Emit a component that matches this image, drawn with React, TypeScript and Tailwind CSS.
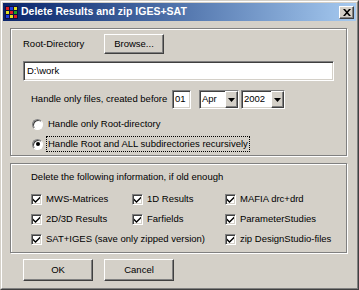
const raised =
  "border border-t-white border-l-white border-r-[#404040] border-b-[#404040] shadow-[inset_-1px_-1px_0_#808080] bg-[#d4d0c8]";
const sunken =
  "border border-t-[#808080] border-l-[#808080] border-r-white border-b-white shadow-[inset_1px_1px_0_#404040,inset_-1px_-1px_0_#d4d0c8] bg-white";
const etched =
  "border border-[#808080] shadow-[inset_1px_1px_0_white,1px_1px_0_white]";

function CheckBox({ label, className = "" }: { label: string; className?: string }) {
  return (
    <div className={"flex items-center h-[13px] whitespace-nowrap " + className}>
      <div className={sunken + " w-[11px] h-[11px] flex items-center justify-center"}>
        <svg width="7" height="7" viewBox="0 0 7 7">
          <path d="M0 2.5 L2.5 5 L7 0.5 L7 2.5 L2.5 7 L0 4.5 Z" fill="#000" />
        </svg>
      </div>
      <span className="ml-[4px]">{label}</span>
    </div>
  );
}

function Radio({ label, checked, focus }: { label: string; checked?: boolean; focus?: boolean }) {
  return (
    <div className="flex items-center h-[14px] pl-[21px] whitespace-nowrap">
      <div className="w-[11px] h-[11px] rounded-full bg-white border border-t-[#808080] border-l-[#808080] border-r-white border-b-white shadow-[inset_1px_1px_0_#404040] flex items-center justify-center">
        {checked && <div className="w-[4px] h-[4px] rounded-full bg-black" />}
      </div>
      <span
        className={
          "ml-[4px] px-[1px] " + (focus ? "outline outline-1 outline-dotted outline-black" : "")
        }
      >
        {label}
      </span>
    </div>
  );
}

function Select({ value, width }: { value: string; width: string }) {
  return (
    <div className={sunken + " h-[19px] flex items-stretch " + width}>
      <span className="flex-1 flex items-center pl-[2px]">{value}</span>
      <div className={raised + " w-[13px] flex items-center justify-center"}>
        <svg width="7" height="4" viewBox="0 0 7 4">
          <path d="M0 0 H7 L3.5 4 Z" fill="#000" />
        </svg>
      </div>
    </div>
  );
}

export default function App() {
  return (
    <div
      className="w-[359px] h-[290px] bg-[#d4d0c8] border border-t-[#d4d0c8] border-l-[#d4d0c8] border-r-[#404040] border-b-[#404040] text-[9.5px] text-black"
      style={{ fontFamily: '"Liberation Sans", Arial, sans-serif' }}
    >
      <div className="h-full border border-t-white border-l-white border-r-[#808080] border-b-[#808080] p-[1px] flex flex-col">
        {/* Title bar */}
        <div className="h-[18px] flex items-center bg-gradient-to-r from-[#0a246a] to-[#a6caf0] pl-[2px] pr-[2px]">
          <svg width="13" height="13" viewBox="0 0 13 13">
            <rect width="13" height="13" fill="#101040" />
            <rect x="1" y="1" width="3" height="3" fill="#e02020" />
            <rect x="5" y="1" width="3" height="3" fill="#2040e0" />
            <rect x="9" y="1" width="3" height="3" fill="#e0e020" />
            <rect x="1" y="5" width="3" height="3" fill="#e0e020" />
            <rect x="5" y="5" width="3" height="3" fill="#e02020" />
            <rect x="9" y="5" width="3" height="3" fill="#20a020" />
            <rect x="1" y="9" width="3" height="3" fill="#2040e0" />
            <rect x="5" y="9" width="3" height="3" fill="#e0e020" />
            <rect x="9" y="9" width="3" height="3" fill="#e02020" />
          </svg>
          <span className="ml-[3px] text-white font-bold text-[10.5px] whitespace-nowrap">
            Delete Results and zip IGES+SAT
          </span>
          <div className={raised + " ml-auto w-[15px] h-[13px] flex items-center justify-center"}>
            <svg width="8" height="7" viewBox="0 0 8 7">
              <path d="M0 0 H2 L4 2.3 L6 0 H8 L5 3.5 L8 7 H6 L4 4.7 L2 7 H0 L3 3.5 Z" fill="#000" />
            </svg>
          </div>
        </div>

        <div className="pl-[7px] pr-[9px]">
          {/* Group 1 */}
          <div className={etched + " mt-[7px] h-[128px] pl-[12px]"}>
            <div className="mt-[5px] flex items-center h-[20px]">
              <span className="w-[81px]">Root-Directory</span>
              <div className={raised + " w-[60px] h-[20px] flex items-center justify-center"}>
                Browse...
              </div>
            </div>
            <div className={sunken + " mt-[7px] w-[311px] h-[20px] flex items-center pl-[3px]"}>
              D:\work
            </div>
            <div className="mt-[9px] h-[19px] flex items-center pl-[8px] whitespace-nowrap">
              <span className="w-[141px] shrink-0">Handle only files, created before</span>
              <div className={sunken + " w-[19px] h-[19px] flex items-center pl-[2px]"}>01</div>
              <div className="w-[8px]" />
              <Select value="Apr" width="w-[40px]" />
              <div className="w-[2px]" />
              <Select value="2002" width="w-[44px]" />
            </div>
            <div className="mt-[8px] -ml-[12px]">
              <Radio label="Handle only Root-directory" />
            </div>
            <div className="mt-[6px] -ml-[12px]">
              <Radio label="Handle Root and ALL subdirectories recursively" checked focus />
            </div>
          </div>

          {/* Group 2 */}
          <div className={etched + " mt-[7px] h-[90px] pl-[20px]"}>
            <div className="mt-[7px] h-[12px] flex items-center">
              Delete the following information, if old enough
            </div>
            <div className="mt-[10px] grid grid-cols-[101px_93px_1fr] gap-y-[7px]">
              <CheckBox label="MWS-Matrices" />
              <CheckBox label="1D Results" />
              <CheckBox label="MAFIA drc+drd" />
              <CheckBox label="2D/3D Results" />
              <CheckBox label="Farfields" />
              <CheckBox label="ParameterStudies" />
              <CheckBox label="SAT+IGES (save only zipped version)" className="col-span-2" />
              <CheckBox label="zip DesignStudio-files" />
            </div>
          </div>

          {/* Buttons */}
          <div className="mt-[6px] pl-[13px] flex gap-[11px]">
            <div className={raised + " w-[70px] h-[22px] flex items-center justify-center"}>OK</div>
            <div className={raised + " w-[70px] h-[22px] flex items-center justify-center"}>Cancel</div>
          </div>
        </div>
      </div>
    </div>
  );
}
